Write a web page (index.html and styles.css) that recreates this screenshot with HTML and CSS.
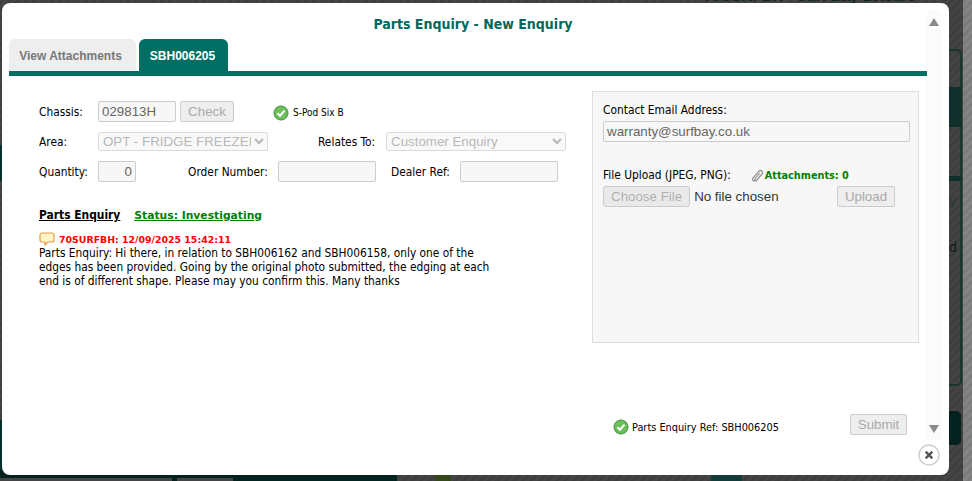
FILE: index.html
```html
<!DOCTYPE html>
<html lang="en">
<head>
<meta charset="utf-8">
<title>Parts Enquiry - New Enquiry</title>
<link rel="stylesheet" href="styles.css">
</head>
<body>
<div class="backdrop">
  <div class="bg-heading">70SURFBH - Surf Bay Leisure</div>
  <div class="bg-panel"></div>
  <div class="bg-band bg-band-a"></div>
  <div class="bg-band bg-band-b"></div>
  <div class="bg-band bg-band-c"></div>
  <div class="bg-char bg-char-d">d</div>
  <div class="bg-char bg-char-y">y</div>
  <div class="bg-left bg-left-a"></div>
  <div class="bg-left bg-left-b"></div>
  <div class="bg-bottom"></div>
  <div class="bg-box bg-box-a"></div>
  <div class="bg-box bg-box-b"></div>
  <div class="bg-leaf"></div>
  <div class="bg-teal"></div>
  <div class="bg-strip"></div>
</div>

<div class="modal">
  <div class="content">
    <h1 class="title">Parts Enquiry - New Enquiry</h1>
    <div class="tabs">
      <div class="tab">View Attachments</div>
      <div class="tab tab-active">SBH006205</div>
    </div>
    <div class="body">
      <div class="left">
        <div class="row row-chassis">
          <label class="lbl lbl-first">Chassis:</label>
          <input class="field field-chassis" type="text" value="029813H" disabled>
          <button class="btn btn-check" disabled>Check</button>
          <svg class="ok ok-chassis" viewBox="0 0 16 16"><circle cx="8" cy="8" r="7" fill="#6cbf5a" stroke="#3f8f3f"/><path d="M4.5 8.2l2.5 2.5 4.5-5" fill="none" stroke="#fff" stroke-width="2"/></svg>
          <span class="small">S-Pod Six B</span>
        </div>
        <div class="row row-area">
          <label class="lbl lbl-first">Area:</label>
          <select class="field sel sel-area" disabled><option>OPT - FRIDGE FREEZER</option></select>
          <label class="lbl lbl-relates">Relates To:</label>
          <select class="field sel sel-relates" disabled><option>Customer Enquiry</option></select>
        </div>
        <div class="row row-qty">
          <label class="lbl lbl-first">Quantity:</label>
          <input class="field field-qty" type="text" value="0" disabled>
          <label class="lbl lbl-order">Order Number:</label>
          <input class="field field-order" type="text" disabled>
          <label class="lbl lbl-dealer">Dealer Ref:</label>
          <input class="field field-order" type="text" disabled>
        </div>
        <div class="heading">
          <span class="heading-main">Parts Enquiry</span>
          <span class="heading-status">Status: Investigating</span>
        </div>
        <div class="note-head">
          <svg class="bubble" viewBox="0 0 16 14"><path d="M3 1h10a2 2 0 0 1 2 2v5a2 2 0 0 1-2 2H9l-3 3v-3H3a2 2 0 0 1-2-2V3a2 2 0 0 1 2-2z" fill="#fff6c8" stroke="#ec9a4a" stroke-width="1.2"/></svg>
          <span class="note-meta">70SURFBH: 12/09/2025 15:42:11</span>
        </div>
        <p class="note-text">Parts Enquiry: Hi there, in relation to SBH006162 and SBH006158, only one of the edges has been provided. Going by the original photo submitted, the edging at each end is of different shape. Please may you confirm this. Many thanks</p>
      </div>
      <div class="right">
        <div class="lbl">Contact Email Address:</div>
        <input class="field field-email" type="text" value="warranty@surfbay.co.uk" disabled>
        <div class="upload-head">
          <span class="lbl">File Upload (JPEG, PNG):</span>
          <svg class="clip" viewBox="0 0 14 14"><path d="M3.2 13a2.1 2.1 0 0 1-2.3-3.1l6.6-7.6a2.3 2.3 0 0 1 3.6 2.8l-6 7a1.3 1.3 0 0 1-2-1.6l5.2-6" fill="none" stroke="#8a8a8a" stroke-width="1.2"/></svg>
          <span class="attach">Attachments: 0</span>
        </div>
        <div class="upload-row">
          <input class="file" type="file" disabled>
          <button class="btn btn-upload" disabled>Upload</button>
        </div>
      </div>
    </div>
    <div class="foot">
      <svg class="ok ok-foot" viewBox="0 0 16 16"><circle cx="8" cy="8" r="7" fill="#6cbf5a" stroke="#3f8f3f"/><path d="M4.5 8.2l2.5 2.5 4.5-5" fill="none" stroke="#fff" stroke-width="2"/></svg>
      <span class="foot-ref">Parts Enquiry Ref: SBH006205</span>
      <button class="btn btn-submit" disabled>Submit</button>
    </div>
  </div>
  <div class="scrollbar">
    <span class="arrow arrow-up"></span>
    <span class="arrow arrow-down"></span>
  </div>
  <svg class="close" viewBox="0 0 22 22"><circle cx="11" cy="11" r="10" fill="#fff" stroke="#cfcfcf" stroke-width="1.5"/><path d="M7.7 7.7l6.6 6.6M14.3 7.7l-6.6 6.6" stroke="#555" stroke-width="2.4"/></svg>
</div>
</body>
</html>
```
FILE: styles.css
```css
* { box-sizing: border-box; }
html, body { margin: 0; height: 100%; overflow: hidden; }
body {
  width: 972px;
  height: 481px;
  position: relative;
  font-family: "DejaVu Sans Condensed", "DejaVu Sans", sans-serif;
  font-size: 12px;
  color: #000;
  padding: 3px 23px 6px 2px;
  background-color: #404040;
}

/* dimmed page behind the dialog */
.backdrop {
  position: absolute;
  inset: 0;
  overflow: hidden;
  background: repeating-linear-gradient(135deg, #3e3e3e 0 3px, #444 3px 6px);
}
.bg-heading {
  position: absolute;
  left: 704px;
  top: -13px;
  font: bold 15px "Liberation Sans", sans-serif;
  color: #0c2623;
  white-space: nowrap;
}
.bg-panel {
  position: absolute;
  left: 900px;
  top: 49px;
  width: 62px;
  height: 337px;
  border: 2px solid #1a3531;
  border-radius: 5px;
}
.bg-band { position: absolute; left: 900px; width: 61px; background: #10302b; }
.bg-band-a { top: 87px; height: 40px; }
.bg-band-b { top: 176px; height: 5px; }
.bg-band-c { top: 411px; height: 34px; background: #04221d; border-radius: 5px; }
.bg-char { position: absolute; left: 949px; font-size: 14px; color: #0a1c1a; }
.bg-char-d { top: 239px; }
.bg-char-y { top: 192px; color: #2a3b3a; }
.bg-left { position: absolute; left: 0; width: 4px; background: #06302b; }
.bg-left-a { top: 145px; height: 36px; }
.bg-left-b { top: 420px; height: 61px; }
.bg-bottom { position: absolute; left: 0; top: 470px; width: 397px; height: 11px; background: #04221d; }
.bg-box { position: absolute; top: 478px; height: 3px; background: #444; }
.bg-box-a { left: 0; width: 172px; }
.bg-box-b { left: 177px; width: 56px; }
.bg-leaf { position: absolute; left: 435px; top: 470px; width: 16px; height: 11px; background: #34461c; }
.bg-teal { position: absolute; left: 711px; top: 470px; width: 31px; height: 11px; background: #143a3a; }
.bg-strip {
  position: absolute;
  left: 963px;
  top: 0;
  width: 9px;
  height: 481px;
  background: repeating-linear-gradient(135deg, #7c7c7c 0 3px, #858585 3px 6px);
}

/* dialog */
.modal {
  position: relative;
  width: 947px;
  height: 472px;
  background: #fff;
  border-radius: 8px;
  padding: 7px 8px 0 7px;
  display: flex;
}
.content { width: 918px; height: 430px; flex: none; display: flex; flex-direction: column; }
.title {
  margin: 0;
  height: 29px;
  line-height: 28px;
  padding-left: 10px;
  text-align: center;
  font-size: 14px;
  font-weight: bold;
  color: #00695c;
}
.tabs {
  display: flex;
  gap: 3px;
  height: 37px;
  border-bottom: 5px solid #006f63;
}
.tab {
  width: 127px;
  padding-right: 4px;
  border-radius: 6px 6px 0 0;
  background: #eee;
  color: #777;
  font: bold 12px/34px "Liberation Sans", sans-serif;
  text-align: center;
}
.tab-active { width: 89px; padding-right: 2px; background: #006f63; color: #fff; }

.body { display: flex; justify-content: space-between; padding: 15px 8px 0 30px; height: 267px; }
.left { width: 527px; padding-top: 10px; }
.right {
  width: 327px;
  height: 252px;
  background: #f7f7f7;
  border: 1px solid #ddd;
  padding: 11px 8px 0 10px;
}

.row { display: flex; align-items: center; }
.row-chassis { height: 21px; }
.row-area { height: 19px; margin-top: 10px; }
.row-qty { height: 21px; margin-top: 10px; }
.lbl { white-space: nowrap; font-size: 11.85px; }
.lbl-first { width: 59px; flex: none; }
.lbl-relates { margin-left: 50px; width: 68px; flex: none; }
.lbl-order { margin-left: 52px; width: 90px; flex: none; }
.lbl-dealer { margin-left: 15px; width: 69px; flex: none; }

.field {
  height: 21px;
  border: 1px solid #ccc;
  border-radius: 2px;
  background: #f7f7f7;
  color: #666;
  font: 13.333px "Liberation Sans", sans-serif;
  padding: 0 3px;
}
.field-chassis { width: 78px; }
.field-qty { width: 38px; text-align: right; }
.field-order { width: 98px; }
.field-email { display: block; width: 307px; margin-top: 4px; }
.sel { height: 19px; padding: 0; color: #999; background: #f7f7f7; }
.sel-area { width: 170px; }
.sel-relates { width: 180px; }

.btn {
  height: 21px;
  border: 1px solid #ccc;
  border-radius: 2px;
  background: #eee;
  color: #aaa;
  font: 13.333px "Liberation Sans", sans-serif;
  padding: 0;
}
.btn-check { width: 54px; margin-left: 4px; }
.btn-upload { width: 58px; margin-left: auto; margin-right: 15px; }

.ok { width: 16px; height: 16px; flex: none; }
.ok-chassis { margin-left: 39px; margin-top: 2px; }
.small { font-size: 10px; margin-left: 4px; margin-top: 2px; }

.heading { margin-top: 25px; height: 16px; display: flex; gap: 14px; align-items: center; }
.heading-main { font-weight: bold; text-decoration: underline; font-size: 11.9px; }
.heading-status {
  font: bold 10.75px "DejaVu Sans", sans-serif;
  color: #008000;
  text-decoration: underline;
}
.note-head { margin-top: 9px; height: 14px; display: flex; align-items: center; gap: 4px; }
.bubble { width: 16px; height: 14px; flex: none; }
.note-meta { font: bold 9.4px "DejaVu Sans", sans-serif; color: #f00; }
.note-text { margin: 0; width: 452px; line-height: 14px; font-size: 11.8px; }

.upload-head { margin-top: 25px; display: flex; align-items: center; height: 16px; }
.clip { width: 13px; height: 13px; margin-left: 21px; flex: none; }
.attach { font-size: 10.8px; font-weight: bold; color: #008000; }
.upload-row { display: flex; align-items: center; margin-top: 3px; height: 21px; }
.file { font: 13.333px "Liberation Sans", sans-serif; width: 220px; color: #333; }

.foot { display: flex; align-items: center; height: 21px; padding-left: 604px; margin-top: 71px; }
.ok-foot { margin-top: 5px; }
.foot-ref { font-size: 10.85px; margin-left: 3px; margin-top: 5px; width: 147px; white-space: nowrap; }
.btn-submit { width: 57px; margin-left: 71px; }

.scrollbar {
  width: 14px;
  height: 430px;
  flex: none;
  background: #fbfbfb;
  display: flex;
  flex-direction: column;
  justify-content: space-between;
  align-items: center;
  padding: 8px 0 7px;
}
.arrow { width: 0; height: 0; border-left: 5px solid transparent; border-right: 5px solid transparent; }
.arrow-up { border-bottom: 8px solid #8a8a8a; }
.arrow-down { border-top: 8px solid #8a8a8a; }

.close { position: absolute; left: 916px; top: 441px; width: 22px; height: 22px; }
```
